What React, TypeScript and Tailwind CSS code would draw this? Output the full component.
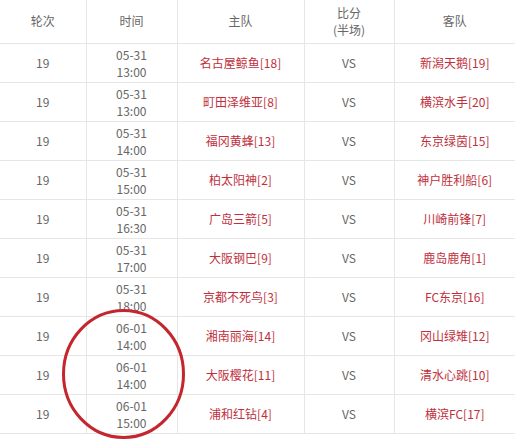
const rows: [string, string, string, string][] = [
  ['05-31', '13:00', '名古屋鲸鱼[18]', '新潟天鹅[19]'],
  ['05-31', '13:00', '町田泽维亚[8]', '横滨水手[20]'],
  ['05-31', '14:00', '福冈黄蜂[13]', '东京绿茵[15]'],
  ['05-31', '15:00', '柏太阳神[2]', '神户胜利船[6]'],
  ['05-31', '16:30', '广岛三箭[5]', '川崎前锋[7]'],
  ['05-31', '17:00', '大阪钢巴[9]', '鹿岛鹿角[1]'],
  ['05-31', '18:00', '京都不死鸟[3]', 'FC东京[16]'],
  ['06-01', '14:00', '湘南丽海[14]', '冈山绿雉[12]'],
  ['06-01', '14:00', '大阪樱花[11]', '清水心跳[10]'],
  ['06-01', '15:00', '浦和红钻[4]', '横滨FC[17]'],
];

export default function App() {
  return (
    <div className="relative w-[515px] h-[445px] bg-white text-[12px] text-[#666] font-['Microsoft_YaHei','Noto_Sans_CJK_SC',sans-serif]">
      <table className="w-full border-collapse table-fixed text-center">
        <colgroup>
          <col className="w-[86px]" />
          <col className="w-[91px]" />
          <col className="w-[127px]" />
          <col className="w-[90px]" />
          <col />
        </colgroup>
        <thead>
          <tr className="h-[43px] border-b border-[#e6e6e6]">
            <th className="font-normal">轮次</th>
            <th className="font-normal border-l border-[#e6e6e6]">时间</th>
            <th className="font-normal border-l border-[#e6e6e6]">主队</th>
            <th className="font-normal border-l border-[#e6e6e6] leading-[17px]">
              比分
              <br />
              (半场)
            </th>
            <th className="font-normal border-l border-[#e6e6e6]">客队</th>
          </tr>
        </thead>
        <tbody>
          {rows.map(([d, t, home, away], i) => (
            <tr key={i} className="h-[39px] border-b border-[#e6e6e6]">
              <td>19</td>
              <td className="border-l border-[#e6e6e6] leading-[17px]">
                {d}
                <br />
                {t}
              </td>
              <td className="border-l border-[#e6e6e6] text-[#c0303c]">{home}</td>
              <td className="border-l border-[#e6e6e6]">VS</td>
              <td className="border-l border-[#e6e6e6] text-[#c0303c]">{away}</td>
            </tr>
          ))}
        </tbody>
      </table>

      {/* hand-drawn annotation */}
      <svg className="absolute left-0 top-0 pointer-events-none" width="515" height="445">
        <ellipse cx="123.5" cy="374" rx="60" ry="63.5" fill="none" stroke="#c4262e" strokeWidth="3" />
      </svg>
    </div>
  );
}
